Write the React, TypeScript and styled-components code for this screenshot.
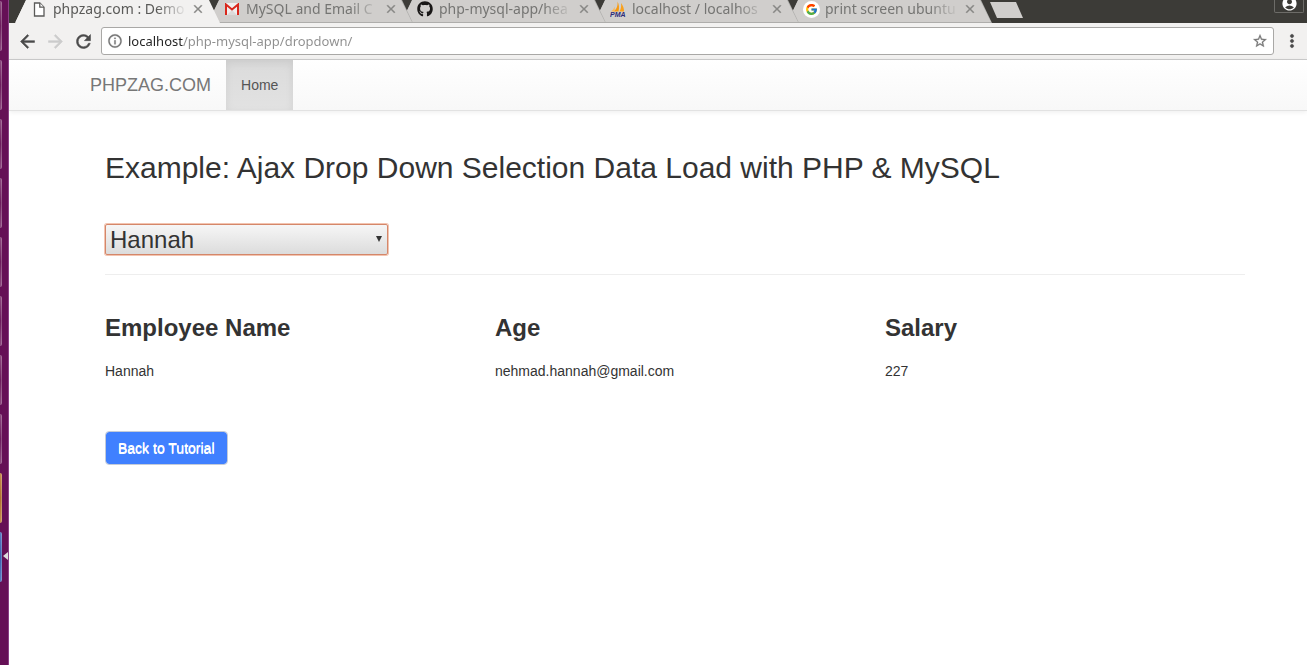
import React from "react";
import styled, { createGlobalStyle, css } from "styled-components";
import { FaGithub } from "react-icons/fa";
import { FcGoogle } from "react-icons/fc";
import {
  MdAccountCircle,
  MdArrowBack,
  MdArrowForward,
  MdClose,
  MdInfoOutline,
  MdMoreVert,
  MdRefresh,
  MdStarBorder,
} from "react-icons/md";

const GlobalStyle = createGlobalStyle`
  *, *::before, *::after { box-sizing: border-box; }
  body {
    margin: 0;
    background: #fff;
    color: #333;
    font: 14px/20px "Liberation Sans", Arial, sans-serif;
    overflow-x: hidden;
  }
  button, input, select { font: inherit; color: inherit; margin: 0; }
`;

const Desktop = styled.div`
  display: flex;
  min-height: 100vh;
`;

/* Desktop launcher, peeking in at the left edge */
const Launcher = styled.aside`
  position: relative;
  flex: none;
  width: 9px;
  display: flex;
  flex-direction: column;
  gap: 9px;
  padding-top: 1px;
  background: #651056;
  border-right: 1px solid #8a3f85;
`;

const LauncherTile = styled.span<{ $from: string; $to: string }>`
  width: 2px;
  height: 50px;
  border-radius: 0 2px 2px 0;
  border-right: 1px solid rgba(255, 255, 255, 0.22);
  background: linear-gradient(${(p) => p.$from}, ${(p) => p.$to} 50%, ${(p) => p.$from});
`;

const LauncherPip = styled.span`
  position: absolute;
  right: 0;
  top: 552px;
  border: 4px solid transparent;
  border-left-width: 0;
  border-right: 5px solid #ddd;
`;

const Browser = styled.div`
  flex: 1;
  min-width: 0;
`;

const TabStrip = styled.div`
  display: flex;
  height: 23px;
  padding-left: 6px;
  background: #3c3b37;
  overflow: hidden;
`;

const TabList = styled.div`
  display: flex;
  isolation: isolate;
`;

const tabOutline = css`
  clip-path: polygon(11px 0, calc(100% - 11px) 0, 100% 100%, 0 100%);
`;

/* Thickens an icon's drawn paths, leaving its unfilled bounding path alone */
const iconWeight = (width: string) => css`
  svg { flex: none; }
  path:not([fill="none"]) {
    stroke: currentColor;
    stroke-width: ${width};
  }
`;

const Tab = styled.div<{ $active?: boolean; $order: number }>`
  position: relative;
  z-index: ${(p) => p.$order};
  flex: none;
  display: flex;
  align-items: flex-start;
  width: 205px;
  height: 23px;
  margin-right: -12px;
  padding-left: 16px;
  color: ${(p) => (p.$active ? "#5a5a58" : "#757573")};
  background: ${(p) => (p.$active ? "#f2f1f0" : "#aeadab")};
  ${tabOutline}

  &::before {
    content: "";
    position: absolute;
    z-index: -1;
    inset: 0 1px 1px 0;
    background: ${(p) => (p.$active ? "#f2f1f0" : "#d0cecc")};
    ${tabOutline}
  }
`;

const Favicon = styled.span`
  flex: none;
  display: flex;
  justify-content: center;
  width: 16px;
  height: 18px;
  align-items: center;
  svg { display: block; }
`;

const GoogleDisc = styled.span`
  display: flex;
  padding: 2px;
  border-radius: 50%;
  background: #fff;
`;

const TabTitle = styled.button`
  flex: none;
  width: 138px;
  margin-left: 6px;
  padding: 0;
  border: 0;
  background: none;
  overflow: hidden;
  text-align: left;
  white-space: nowrap;
  font-family: "Noto Sans", sans-serif;
  font-size: 14px;
  line-height: 18px;
  mask-image: linear-gradient(90deg, #000 104px, transparent 134px);
`;

const TabClose = styled.button`
  flex: none;
  display: flex;
  padding: 2px 0 0;
  border: 0;
  background: none;
  color: #868684;
  ${iconWeight("0.7px")}
`;

const NewTab = styled.button`
  width: 33px;
  height: 16px;
  margin: 2px 0 0 10px;
  padding: 0;
  border: 0;
  background: #d0cecc;
  clip-path: polygon(0 0, 26px 0, 100% 100%, 7px 100%);
`;

const ProfileButton = styled.button`
  display: flex;
  justify-content: center;
  align-items: flex-end;
  width: 30px;
  height: 13px;
  margin-left: auto;
  margin-right: 3px;
  padding: 0;
  border: 1px solid #6d6c68;
  border-top: 0;
  border-radius: 0 0 2px 2px;
  background: none;
  color: #fff;
  svg { flex: none; }
`;

const Toolbar = styled.div`
  display: flex;
  align-items: center;
  padding: 4px 5px 4px 8px;
  background: #f2f1f0;
  border-bottom: 1px solid #ccc;
`;

const ToolButton = styled.button`
  flex: none;
  display: flex;
  justify-content: center;
  width: 20px;
  margin-right: 8px;
  padding: 0;
  border: 0;
  background: none;
  color: #4a4a4a;
  ${iconWeight("0.6px")}
  &:disabled { color: #ccc; }
`;

const AddressBar = styled.div`
  flex: 1;
  display: flex;
  align-items: center;
  gap: 5px;
  height: 28px;
  padding: 0 5px;
  border: 1px solid #a9a8a6;
  border-radius: 3px;
  background: #fff;
  color: #757575;
  ${iconWeight("0.4px")}
`;

const AddressInput = styled.input`
  flex: 1;
  min-width: 0;
  height: 22px;
  padding: 0;
  border: 0;
  outline: 0;
  font-family: "Noto Sans", sans-serif;
  font-size: 13px;
  color: transparent;
  background: linear-gradient(90deg, #222 55px, #8e8e8e 55px);
  background-clip: text;
  -webkit-background-clip: text;
`;

const MenuButton = styled(ToolButton)`
  margin: 0 0 0 8px;
`;

const Navbar = styled.nav`
  display: flex;
  padding-left: 66px;
  border-bottom: 1px solid #e2e2e2;
  background: linear-gradient(#fff, #f8f8f8);
  box-shadow: 0 1px 5px rgba(0, 0, 0, 0.075);
`;

const Brand = styled.a`
  padding: 15px;
  font-size: 18px;
  color: #777;
  text-decoration: none;
`;

const NavLink = styled.a`
  padding: 15px;
  color: #555;
  text-decoration: none;
  background: linear-gradient(#dbdbdb, #e2e2e2);
  box-shadow: inset 0 3px 9px rgba(0, 0, 0, 0.075);
`;

const Content = styled.main`
  max-width: 1236px;
  padding: 40px 0 40px 96px;
`;

const Title = styled.h2`
  margin: 0;
  font-size: 30px;
  font-weight: 400;
  line-height: 33px;
`;

const Picker = styled.label`
  position: relative;
  display: block;
  width: 283px;
  margin-top: 40px;

  &::after {
    content: "";
    position: absolute;
    right: 6px;
    top: 12px;
    border: 3px solid transparent;
    border-top: 6px solid #333;
    border-bottom: 0;
    pointer-events: none;
  }
`;

const Select = styled.select`
  display: block;
  appearance: none;
  width: 100%;
  height: 31px;
  padding: 0 4px;
  border: 1px solid #d4876a;
  border-radius: 2px;
  outline: 0;
  font-size: 24px;
  line-height: 28px;
  background: linear-gradient(#f6f6f6, #dcdcdc);
  box-shadow: 0 0 0 1px #f3c4b0;
`;

const Divider = styled.hr`
  margin: 19px 0 40px;
  border: 0;
  border-top: 1px solid #eee;
`;

const Employee = styled.table`
  width: 100%;
  table-layout: fixed;
  border-collapse: collapse;

  th, td { padding: 0 30px 0 0; text-align: left; }
  th { font-size: 24px; line-height: 26px; }
  td { padding-top: 20px; }
`;

const EmployeeFrame = styled.div`
  margin-right: -30px;
`;

const BackLink = styled.a`
  display: inline-block;
  margin-top: 50px;
  padding: 6px 12px;
  border: 1px solid #c4cbd8;
  border-radius: 4px;
  background: #4080ff;
  background-clip: padding-box;
  color: #fff;
  text-decoration: none;
  text-shadow: 0 1px 0 #fff;
`;

const PageIcon = () => (
  <svg width="12" height="15" viewBox="0 0 12 15" fill="#fff" stroke="#5a5a58" strokeWidth="1.3">
    <path d="M1.5 1h5.3L11 5.2V14H1.5z" />
    <path d="M6.8 1v4.2H11" />
  </svg>
);

const GmailIcon = () => (
  <svg width="16" height="12" viewBox="0 0 16 12">
    <path d="M1 0h14v12H1z" fill="#f0eeee" />
    <path d="M3 12l5-5 5 5z" fill="#dcdada" />
    <path d="M2 12V1.500L8 6.500l6-5V12" fill="none" stroke="#d9271c" strokeWidth="2" />
  </svg>
);

const SailIcon = () => (
  <svg width="16" height="16" viewBox="0 0 16 16">
    <path d="M7.500 0.500C8 4 7 8 3.500 10.500H8.500C9.500 7 9 3 7.500 0.500z" fill="#f79a10" />
    <path d="M11 2c2 2.500 3.200 5.500 3 8.500H9.500C11 8 11.500 5 11 2z" fill="#f9a01b" />
    <path d="M1 10.500C2.500 9.500 4 7.500 4.500 5.500L5 10.500z" fill="#fbb95a" />
    <text x="0" y="15.500" fontFamily="Liberation Sans, sans-serif" fontSize="7" fontWeight="700" fontStyle="italic" fill="#2d2a78">PMA</text>
  </svg>
);

const tabs = [
  { title: "phpzag.com : Demo", icon: <PageIcon /> },
  { title: "MySQL and Email C", icon: <GmailIcon /> },
  { title: "php-mysql-app/hea", icon: <FaGithub size={16} color="#191717" /> },
  { title: "localhost / localhos", icon: <SailIcon /> },
  { title: "print screen ubuntu", icon: <GoogleDisc><FcGoogle size={13} /></GoogleDisc> },
];

const plum = { from: "#8d4b80", to: "#6d1d5d" };
const tiles = [
  ...Array.from({ length: 8 }, () => plum),
  { from: "#c58d4e", to: "#b0702e" },
  { from: "#5a7cc0", to: "#3c5fb0" },
];

export default function App() {
  return (
    <>
      <GlobalStyle />
      <Desktop>
        <Launcher aria-label="Launcher">
          {tiles.map((tile, i) => (
            <LauncherTile key={i} $from={tile.from} $to={tile.to} />
          ))}
          <LauncherPip />
        </Launcher>
        <Browser>
          <TabStrip>
            <TabList>
              {tabs.map((tab, i) => (
                <Tab key={tab.title} $active={i === 0} $order={tabs.length - i}>
                  <Favicon>{tab.icon}</Favicon>
                  <TabTitle type="button">{tab.title}</TabTitle>
                  <TabClose type="button" aria-label={`Close ${tab.title}`}>
                    <MdClose size={14} />
                  </TabClose>
                </Tab>
              ))}
            </TabList>
            <NewTab type="button" aria-label="New tab" />
            <ProfileButton type="button" aria-label="Profile">
              <MdAccountCircle size={17} />
            </ProfileButton>
          </TabStrip>
          <Toolbar>
            <ToolButton type="button" aria-label="Back"><MdArrowBack size={21} /></ToolButton>
            <ToolButton type="button" aria-label="Forward" disabled><MdArrowForward size={21} /></ToolButton>
            <ToolButton type="button" aria-label="Reload"><MdRefresh size={21} /></ToolButton>
            <AddressBar>
              <MdInfoOutline size={16} />
              <AddressInput aria-label="Address" defaultValue="localhost/php-mysql-app/dropdown/" />
              <MdStarBorder size={16} />
            </AddressBar>
            <MenuButton type="button" aria-label="Menu"><MdMoreVert size={20} /></MenuButton>
          </Toolbar>
          <Navbar>
            <Brand href="#">PHPZAG.COM</Brand>
            <NavLink href="#">Home</NavLink>
          </Navbar>
          <Content>
            <Title>Example: Ajax Drop Down Selection Data Load with PHP &amp; MySQL</Title>
            <Picker>
              <Select aria-label="Employee" defaultValue="Hannah">
                <option>Hannah</option>
              </Select>
            </Picker>
            <Divider />
            <EmployeeFrame>
              <Employee>
                <thead>
                  <tr>
                    <th scope="col">Employee Name</th>
                    <th scope="col">Age</th>
                    <th scope="col">Salary</th>
                  </tr>
                </thead>
                <tbody>
                  <tr>
                    <td>Hannah</td>
                    <td>nehmad.hannah@gmail.com</td>
                    <td>227</td>
                  </tr>
                </tbody>
              </Employee>
            </EmployeeFrame>
            <BackLink href="#">Back to Tutorial</BackLink>
          </Content>
        </Browser>
      </Desktop>
    </>
  );
}
